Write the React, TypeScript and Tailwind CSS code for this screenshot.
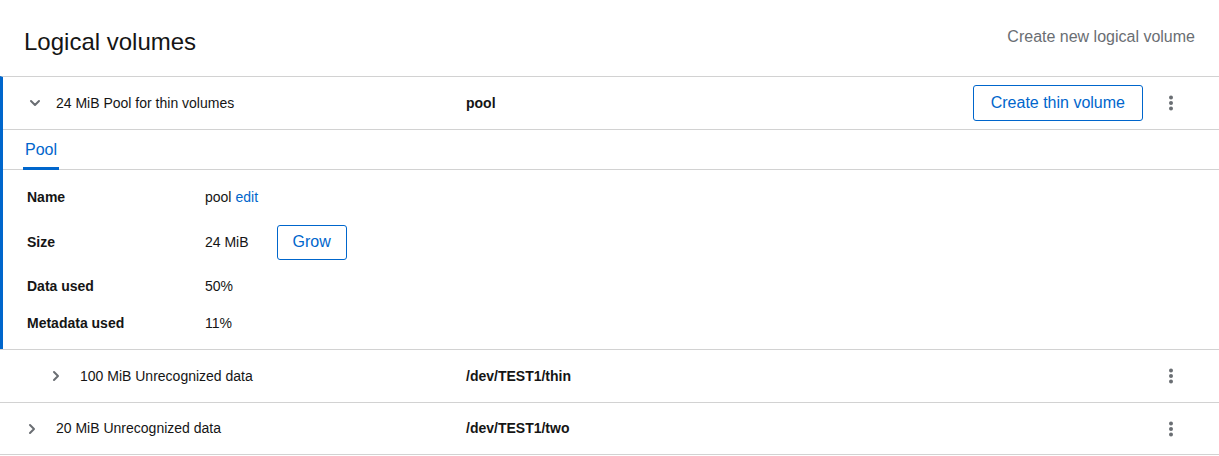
import { ChevronDown, ChevronRight } from 'lucide-react';

const font = { fontFamily: '"Liberation Sans", Arial, sans-serif' };

function Kebab() {
  return (
    <button className="flex h-9 w-9 items-center justify-center">
      <svg width="4" height="16" viewBox="0 0 4 16" fill="#6a6e73">
        <circle cx="2" cy="2.5" r="2" />
        <circle cx="2" cy="8" r="2" />
        <circle cx="2" cy="13.5" r="2" />
      </svg>
    </button>
  );
}

const details = [
  { label: 'Name', value: 'pool', edit: true, h: 'h-[38px]' },
  { label: 'Size', value: '24 MiB', grow: true, h: 'h-[52px]' },
  { label: 'Data used', value: '50%', h: 'h-[37px]' },
  { label: 'Metadata used', value: '11%', h: 'h-[37px]' },
];

export default function App() {
  return (
    <div className="min-h-screen bg-white text-[#151515]" style={font}>
      {/* Header */}
      <div className="flex h-[76px] items-start justify-between pl-6 pr-6">
        <h1 className="mt-[27px] text-[24px] leading-[30px]">Logical volumes</h1>
        <span className="mt-[25px] text-[16px] text-[#6a6e73]">Create new logical volume</span>
      </div>

      {/* Expanded pool row */}
      <div className="border-t border-[#d2d2d2] border-l-[3px] border-l-[#0066cc]">
        <div className="flex h-[52px] items-center">
          <ChevronDown className="ml-[24px] h-[16px] w-[16px] text-[#6a6e73]" strokeWidth={3} />
          <span className="ml-[13px] w-[410px] text-[14px]">24 MiB Pool for thin volumes</span>
          <span className="flex-1 text-[14px] font-bold">pool</span>
          <button className="h-9 rounded-[3px] border border-[#0066cc] px-[17px] text-[16px] text-[#0066cc]">
            Create thin volume
          </button>
          <div className="ml-[10px] mr-[30px]">
            <Kebab />
          </div>
        </div>

        <div className="border-t border-[#d2d2d2]">
          <div className="flex border-b border-[#d2d2d2] px-5">
            <div className="-mb-px border-b-[3px] border-[#0066cc] px-[2px] pt-[8px] pb-[5px] text-[16px] leading-6 text-[#0066cc]">
              Pool
            </div>
          </div>
          <div className="flex flex-col pl-6 pt-[8px] pb-[7px]">
            {details.map(d => (
              <div key={d.label} className={`flex items-center text-[14px] ${d.h}`}>
                <span className="w-[178px] font-bold">{d.label}</span>
                <span>{d.value}</span>
                {d.edit && <span className="ml-1 text-[#0066cc]">edit</span>}
                {d.grow && (
                  <button className="ml-[28px] h-[35px] rounded-[3px] border border-[#0066cc] px-[15px] text-[16px] text-[#0066cc]">
                    Grow
                  </button>
                )}
              </div>
            ))}
          </div>
        </div>
      </div>

      {/* Collapsed rows */}
      <div className="flex h-[53px] items-center border-t border-[#d2d2d2]">
        <ChevronRight className="ml-[48px] h-[16px] w-[16px] text-[#6a6e73]" strokeWidth={3} />
        <span className="ml-[16px] w-[386px] text-[14px]">100 MiB Unrecognized data</span>
        <span className="flex-1 text-[14px] font-bold">/dev/TEST1/thin</span>
        <div className="mr-[30px]">
          <Kebab />
        </div>
      </div>
      <div className="flex h-[53px] items-center border-y border-[#d2d2d2]">
        <ChevronRight className="ml-[24px] h-[16px] w-[16px] text-[#6a6e73]" strokeWidth={3} />
        <span className="ml-[16px] w-[410px] text-[14px]">20 MiB Unrecognized data</span>
        <span className="flex-1 text-[14px] font-bold">/dev/TEST1/two</span>
        <div className="mr-[30px]">
          <Kebab />
        </div>
      </div>
    </div>
  );
}
